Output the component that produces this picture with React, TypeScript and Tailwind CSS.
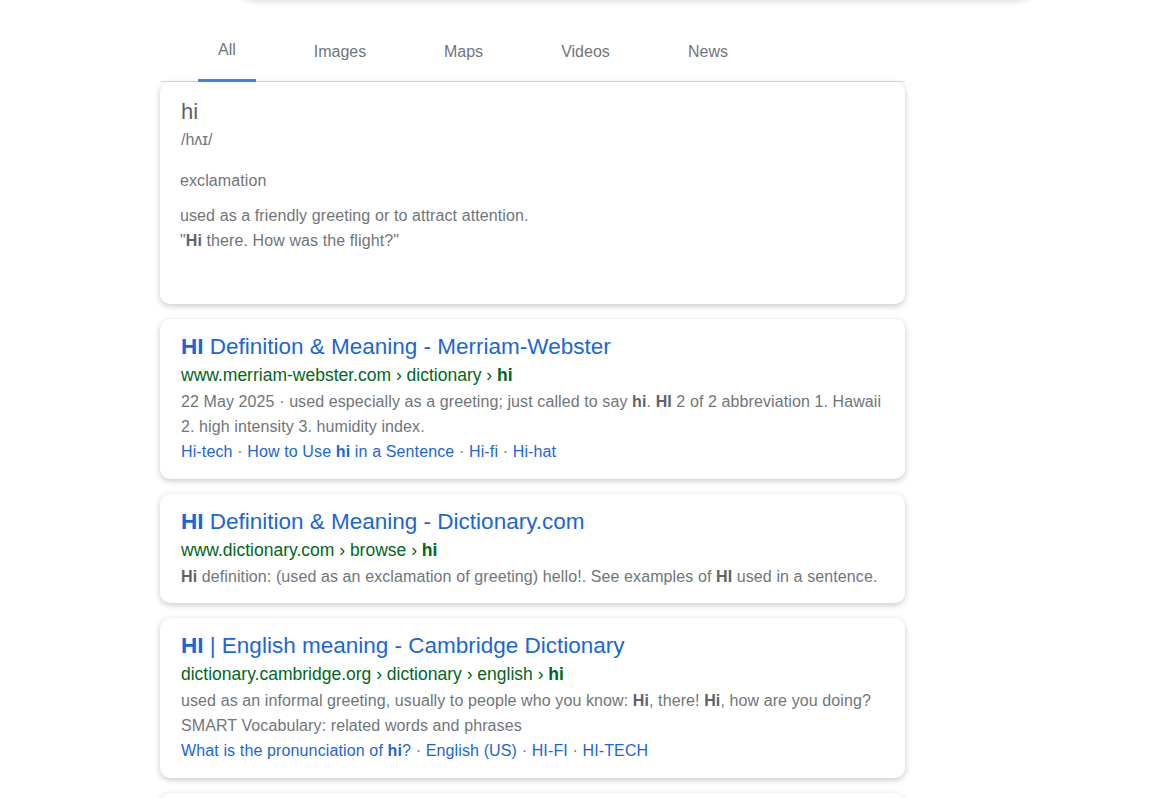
import React from "react";

const font = { fontFamily: '"Liberation Sans", Arial, sans-serif' };

function Sep() {
  return <span className="text-[#70757a]"> · </span>;
}

const card = "rounded-[10px] shadow-[0_2px_6px_rgba(0,0,0,0.22)] bg-white";
const title = "text-[22.5px] leading-[28px] text-[#1a66d8]";
const url = "text-[17.5px] leading-[28px] text-[#006621]";
const snip = "text-[16px] leading-[25px] text-[#70757a] tracking-[0.1px]";
const links = "text-[16px] leading-[25px] text-[#1a66d8] tracking-[0.13px]";

export default function App() {
  return (
    <div className="w-[1160px] h-[798px] overflow-hidden bg-white relative" style={font}>
      <div className="absolute left-[236px] top-[-40px] w-[800px] h-[40px] bg-white rounded-b-[20px] shadow-[0_1px_6px_rgba(32,33,36,0.18)]" />
      <div className="ml-[160px] w-[745px] pt-[30px]">
        <div className="flex pl-[38px] border-b border-[#dadce0] h-[52px] text-[16px] text-[#70757a]">
          <div className="w-[58px] flex justify-center border-b-[3px] border-[#4285f4] -mb-px">
            <span className="pt-[8px]">All</span>
          </div>
          <div className="ml-[34px] w-[100px] text-center pt-[10px]">Images</div>
          <div className="ml-[23px] w-[101px] text-center pt-[10px]">Maps</div>
          <div className="ml-[21px] w-[101px] text-center pt-[10px]">Videos</div>
          <div className="ml-[22px] w-[100px] text-center pt-[10px]">News</div>
        </div>

        <div className="flex flex-col gap-[15px]">
          <div className={`${card} px-[21px] pt-[16px] h-[222px]`}>
            <div className="text-[22px] leading-[28px] text-[#5f6368]">hi</div>
            <div className="text-[16px] leading-[28px] text-[#70757a]">/hʌɪ/</div>
            <div className="mt-[17px] text-[16px] leading-[20px] text-[#70757a] -ml-[1px] tracking-[0.1px]">exclamation</div>
            <div className="mt-[12px] text-[16px] leading-[25px] text-[#70757a] -ml-[1px] tracking-[0.1px]">
              <div>used as a friendly greeting or to attract attention.</div>
              <div>"<b className="text-[#5f6368]">Hi</b> there. How was the flight?"</div>
            </div>
          </div>

          <div className={`${card} px-[21px] pt-[14px] pb-[15px]`}>
            <div className={title}><b>HI</b> Definition &amp; Meaning - Merriam-Webster</div>
            <div className={url}>www.merriam-webster.com › dictionary › <b>hi</b></div>
            <div className={snip}>
              22 May 2025 · used especially as a greeting; just called to say <b className="text-[#5f6368]">hi</b>. <b className="text-[#5f6368]">HI</b> 2 of 2 abbreviation 1. Hawaii
              <br />
              2. high intensity 3. humidity index.
            </div>
            <div className={links}>
              Hi-tech<Sep />How to Use <b>hi</b> in a Sentence<Sep />Hi-fi<Sep />Hi-hat
            </div>
          </div>

          <div className={`${card} px-[21px] pt-[14px] pb-[14px]`}>
            <div className={title}><b>HI</b> Definition &amp; Meaning - Dictionary.com</div>
            <div className={url}>www.dictionary.com › browse › <b>hi</b></div>
            <div className={snip}>
              <b className="text-[#5f6368]">Hi</b> definition: (used as an exclamation of greeting) hello!. See examples of <b className="text-[#5f6368]">HI</b> used in a sentence.
            </div>
          </div>

          <div className={`${card} px-[21px] pt-[14px] pb-[15px]`}>
            <div className={title}><b>HI</b> | English meaning - Cambridge Dictionary</div>
            <div className={url}>dictionary.cambridge.org › dictionary › english › <b>hi</b></div>
            <div className={snip}>
              used as an informal greeting, usually to people who you know: <b className="text-[#5f6368]">Hi</b>, there! <b className="text-[#5f6368]">Hi</b>, how are you doing?
              <br />
              SMART Vocabulary: related words and phrases
            </div>
            <div className={links}>
              What is the pronunciation of <b>hi</b>?<Sep />English (US)<Sep />HI-FI<Sep />HI-TECH
            </div>
          </div>

          <div className={`${card} h-[100px]`} />
        </div>
      </div>
    </div>
  );
}
